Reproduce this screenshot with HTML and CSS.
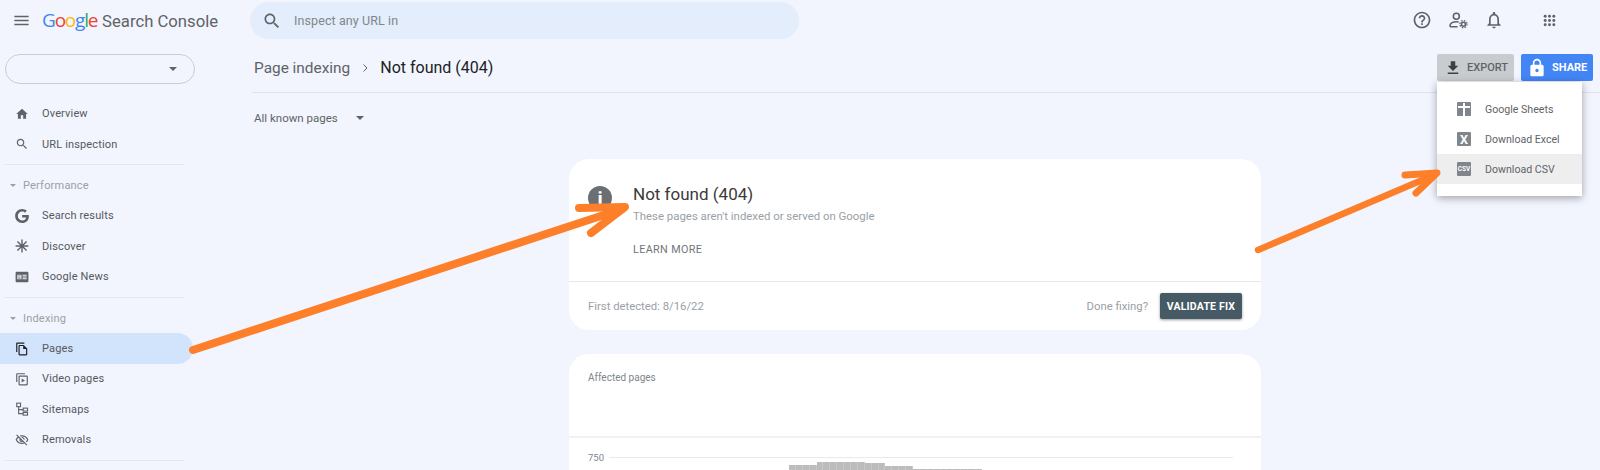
FILE: index.html
```html
<!DOCTYPE html>
<html lang="en">
<head>
  <meta charset="UTF-8" />
  <title>Google Search Console - Not found (404)</title>
  <link rel="stylesheet" href="styles.css">
</head>
<body>
  <header class="topbar">
    <svg class="menu-icon" viewBox="0 0 24 24"><path d="M3 18h18v-2H3v2zm0-5h18v-2H3v2zm0-7v2h18V6H3z"/></svg>
    <div class="logo">
      <span class="g-blue">G</span><span class="g-red">o</span><span class="g-yellow">o</span><span class="g-blue">g</span><span class="g-green">l</span><span class="g-red">e</span>
      <span class="logo-name">Search Console</span>
    </div>
    <div class="search">
      <svg class="search-icon" viewBox="0 0 24 24"><path d="M15.5 14h-.79l-.28-.27C15.41 12.59 16 11.11 16 9.5 16 5.91 13.09 3 9.5 3S3 5.91 3 9.5 5.91 16 9.5 16c1.61 0 3.09-.59 4.23-1.57l.27.28v.79l5 4.99L20.49 19l-4.99-5zm-6 0C7.01 14 5 11.99 5 9.5S7.01 5 9.5 5 14 7.01 14 9.5 11.99 14 9.5 14z"/></svg>
      <span>Inspect any URL in</span>
    </div>
    <div class="top-icons">
      <svg viewBox="0 0 24 24"><path d="M11 18h2v-2h-2v2zm1-16C6.48 2 2 6.48 2 12s4.48 10 10 10 10-4.48 10-10S17.52 2 12 2zm0 18c-4.41 0-8-3.59-8-8s3.59-8 8-8 8 3.59 8 8-3.59 8-8 8zm0-14c-2.21 0-4 1.79-4 4h2c0-1.1.9-2 2-2s2 .9 2 2c0 2-3 1.75-3 5h2c0-2.25 3-2.5 3-5 0-2.21-1.79-4-4-4z"/></svg>
      <svg class="line-icon" viewBox="0 0 24 24" stroke-width="1.9"><circle cx="10" cy="7.5" r="3.6"/><path d="M2.5 20v-1.6c0-2.8 4-4.4 7.5-4.4 1 0 1.9.1 2.8.4M2.5 20h9"/><circle cx="18.5" cy="17" r="2.4"/><circle cx="18.5" cy="17" r="4.3" stroke-width="1.6" stroke-dasharray="1.7 1.7"/></svg>
      <svg viewBox="0 0 24 24"><path d="M12 22c1.1 0 2-.9 2-2h-4c0 1.1.9 2 2 2zm6-6v-5c0-3.07-1.63-5.64-4.5-6.32V4c0-.83-.67-1.5-1.5-1.5s-1.5.67-1.5 1.5v.68C7.64 5.36 6 7.92 6 11v5l-2 2v1h16v-1l-2-2zm-2 1H8v-6c0-2.48 1.51-4.5 4-4.5s4 2.02 4 4.5v6z"/></svg>
      <svg class="apps" viewBox="0 0 24 24"><circle cx="4" cy="4" r="2.7"/><circle cx="12" cy="4" r="2.7"/><circle cx="20" cy="4" r="2.7"/><circle cx="4" cy="12" r="2.7"/><circle cx="12" cy="12" r="2.7"/><circle cx="20" cy="12" r="2.7"/><circle cx="4" cy="20" r="2.7"/><circle cx="12" cy="20" r="2.7"/><circle cx="20" cy="20" r="2.7"/></svg>
    </div>
  </header>

  <div class="layout">
    <aside class="sidebar">
      <div class="property"><span class="caret"></span></div>

      <a class="nav-item">
        <svg viewBox="0 0 24 24"><path d="M10 20v-6h4v6h5v-8h3L12 3 2 12h3v8z"/></svg>
        Overview
      </a>
      <a class="nav-item">
        <svg viewBox="0 0 24 24"><path d="M15.5 14h-.79l-.28-.27C15.41 12.59 16 11.11 16 9.5 16 5.91 13.09 3 9.5 3S3 5.91 3 9.5 5.91 16 9.5 16c1.61 0 3.09-.59 4.23-1.57l.27.28v.79l5 4.99L20.49 19l-4.99-5zm-6 0C7.01 14 5 11.99 5 9.5S7.01 5 9.5 5 14 7.01 14 9.5 11.99 14 9.5 14z"/></svg>
        URL inspection
      </a>
      <div class="nav-divider"></div>

      <div class="nav-group"><span class="group-caret"></span>Performance</div>
      <a class="nav-item">
        <svg viewBox="0 0 24 24"><path d="M12.24 10.285V14.4h6.806c-.275 1.765-2.056 5.174-6.806 5.174-4.095 0-7.439-3.389-7.439-7.574s3.345-7.574 7.439-7.574c2.33 0 3.891.989 4.785 1.849l3.254-3.138C18.189 1.186 15.479 0 12.24 0c-6.635 0-12 5.365-12 12s5.365 12 12 12c6.926 0 11.52-4.869 11.52-11.726 0-.788-.085-1.39-.189-1.989H12.24z"/></svg>
        Search results
      </a>
      <a class="nav-item">
        <svg class="line-icon" viewBox="0 0 24 24" stroke-width="2.4"><path d="M12 1v22M1 12h22M4.2 4.2l15.6 15.6M19.8 4.2L4.2 19.8"/></svg>
        Discover
      </a>
      <a class="nav-item">
        <svg viewBox="0 0 24 24"><path fill-rule="evenodd" d="M3 3h18a2 2 0 0 1 2 2v14a2 2 0 0 1-2 2H3a2 2 0 0 1-2-2V5a2 2 0 0 1 2-2zm1 5v8h7V8H4zm9 0v2h7V8h-7zm0 3v2h7v-2h-7zm0 3v2h7v-2h-7z"/><path d="M5.5 9.5h4v1.4h-4zM5.5 13h4v1.4h-4z"/></svg>
        Google News
      </a>
      <div class="nav-divider"></div>

      <div class="nav-group"><span class="group-caret"></span>Indexing</div>
      <a class="nav-item active">
        <svg viewBox="0 0 24 24"><path d="M16 1H4c-1.1 0-2 .9-2 2v14h2V3h12V1zm-1 4H8c-1.1 0-1.99.9-1.99 2L6 21c0 1.1.89 2 1.99 2H19c1.1 0 2-.9 2-2V11l-6-6zM8 21V7h6v5h5v9H8z"/></svg>
        Pages
      </a>
      <a class="nav-item">
        <svg viewBox="0 0 24 24"><path d="M4 2h13v2H4v13H2V4c0-1.1.9-2 2-2z"/><path fill-rule="evenodd" d="M8 6h12c1.1 0 2 .9 2 2v13c0 1.1-.9 2-2 2H8c-1.1 0-2-.9-2-2V8c0-1.1.9-2 2-2zm0 2v13h12V8H8z"/><path d="M11.5 11v7l5.5-3.5z"/></svg>
        Video pages
      </a>
      <a class="nav-item">
        <svg class="line-icon" viewBox="0 0 24 24" stroke-width="1.9"><rect x="3" y="2" width="6.5" height="6"/><rect x="14" y="10.5" width="7.5" height="5"/><rect x="14" y="18" width="7.5" height="4.5"/><path d="M6.2 8v12H14M6.2 13H14"/></svg>
        Sitemaps
      </a>
      <a class="nav-item">
        <svg viewBox="0 0 24 24"><path d="M12 6c3.79 0 7.17 2.13 8.82 5.5-.59 1.22-1.42 2.27-2.41 3.12l1.41 1.41c1.39-1.23 2.49-2.77 3.18-4.53C21.27 7.11 17 4 12 4c-1.27 0-2.49.2-3.64.57l1.65 1.65C10.66 6.09 11.32 6 12 6zm-1.07 1.14L13 9.21c.57.25 1.03.71 1.28 1.28l2.07 2.07c.08-.34.14-.7.14-1.07C16.5 9.01 14.48 7 12 7c-.37 0-.72.05-1.07.14zM2.01 3.87l2.68 2.68C3.06 7.83 1.77 9.53 1 11.5 2.73 15.89 7 19 12 19c1.52 0 2.98-.29 4.32-.82l3.42 3.42 1.41-1.41L3.42 2.45 2.01 3.87zm7.5 7.5l2.61 2.61c-.04.01-.08.02-.12.02-1.38 0-2.5-1.12-2.5-2.5 0-.05.01-.08.01-.13zm-3.4-3.4l1.75 1.75c-.23.55-.36 1.15-.36 1.78 0 2.48 2.02 4.5 4.5 4.5.63 0 1.23-.13 1.77-.36l.98.98c-.88.24-1.8.38-2.75.38-3.79 0-7.17-2.13-8.82-5.5.7-1.43 1.72-2.61 2.93-3.53z"/></svg>
        Removals
      </a>
      <div class="nav-divider"></div>
    </aside>

    <main class="content">
      <div class="page-head">
        <div class="crumbs">
          <span class="crumb">Page indexing</span>
          <svg class="crumb-sep line-icon" viewBox="0 0 24 24" stroke-width="2"><path d="M9 5l7 7-7 7"/></svg>
          <span class="crumb-current">Not found (404)</span>
        </div>
        <div class="head-actions">
          <div class="export-wrap">
            <button class="btn-export">
              <svg viewBox="0 0 24 24"><path d="M19 9h-4V3H9v6H5l7 7 7-7zM5 18v2h14v-2H5z"/></svg>
              EXPORT
            </button>
            <div class="export-menu">
              <div class="menu-item"><span class="file-icon sheets"></span>Google Sheets</div>
              <div class="menu-item"><span class="file-icon">X</span>Download Excel</div>
              <div class="menu-item selected"><span class="file-icon csv">CSV</span>Download CSV</div>
            </div>
          </div>
          <button class="btn-share">
            <svg viewBox="0 0 24 24"><path d="M18 8h-1V6c0-2.76-2.24-5-5-5S7 3.24 7 6v2H6c-1.1 0-2 .9-2 2v10c0 1.1.9 2 2 2h12c1.1 0 2-.9 2-2V10c0-1.1-.9-2-2-2zm-6 9c-1.1 0-2-.9-2-2s.9-2 2-2 2 .9 2 2-.9 2-2 2zm3.1-9H8.9V6c0-1.71 1.39-3.1 3.1-3.1 1.71 0 3.1 1.39 3.1 3.1v2z"/></svg>
            SHARE
          </button>
        </div>
      </div>

      <div class="filter">All known pages<span class="caret"></span></div>

      <section class="card">
        <div class="card-top">
          <div class="info-icon"><span>i</span></div>
          <div>
            <h2>Not found (404)</h2>
            <p class="card-sub">These pages aren't indexed or served on Google</p>
            <div class="learn-more">LEARN MORE</div>
          </div>
        </div>
        <div class="card-foot">
          <span>First detected: 8/16/22</span>
          <div class="foot-right">
            <span>Done fixing?</span>
            <button class="btn-validate">VALIDATE FIX</button>
          </div>
        </div>
      </section>

      <section class="card chart-card">
        <div class="chart-head">Affected pages</div>
        <div class="chart">
          <div class="grid-row"><span>750</span><div class="grid-line"></div></div>
          <div class="bars">
            <i class="b-mid"></i><i class="b-mid"></i><i class="b-mid"></i><i class="b-mid"></i>
            <i class="b-top"></i><i class="b-top"></i><i class="b-top"></i><i class="b-top"></i><i class="b-top"></i><i class="b-top"></i><i class="b-top"></i>
            <i class="b-high"></i><i class="b-high"></i><i class="b-high"></i>
            <i class="b-low"></i><i class="b-low"></i><i class="b-low"></i><i class="b-low"></i>
            <i class="b-min"></i><i class="b-min"></i><i class="b-min"></i><i class="b-min"></i><i class="b-min"></i>
            <i class="b-min"></i><i class="b-min"></i><i class="b-min"></i><i class="b-min"></i><i class="b-min"></i>
          </div>
        </div>
      </section>
    </main>
  </div>

  <!-- hand drawn arrows on top of the screenshot -->
  <svg class="arrows" viewBox="0 0 1600 470" stroke="#fd7f2a" stroke-linecap="round" stroke-linejoin="round">
    <path stroke-width="8" d="M193 350L622 209"/>
    <path stroke-width="8" d="M579 208L625 207L591 233"/>
    <path stroke-width="6.5" d="M1258 250L1434 175"/>
    <path stroke-width="7" d="M1405 175L1437 173L1416 193"/>
  </svg>
</body>
</html>
```

FILE: styles.css
```css
* {
  box-sizing: border-box;
}

body {
  margin: 0;
  width: 1600px;
  height: 470px;
  position: relative;
  overflow: hidden;
  background: #f2f5fd;
  font-family: Roboto, "Liberation Sans", sans-serif;
  color: #5f6368;
}

svg {
  fill: #5f6368;
  flex: none;
}

svg.line-icon {
  fill: none;
  stroke: #5f6368;
}

/* top bar */
.topbar {
  height: 40px;
  display: flex;
  align-items: center;
  padding-left: 12px;
}

.menu-icon {
  width: 19px;
  height: 19px;
}

.logo {
  width: 208px;
  flex: none;
  margin-left: 11px;
  font-family: "Open Sans", sans-serif;
  font-size: 19px;
  letter-spacing: -1.2px;
  white-space: nowrap;
}

.g-blue { color: #4285f4; }
.g-red { color: #ea4335; }
.g-yellow { color: #fbbc05; }
.g-green { color: #34a853; }

.logo-name {
  margin-left: 1px;
  font-family: Roboto, sans-serif;
  font-size: 16.7px;
  letter-spacing: 0;
  color: #5f6368;
}

.search {
  width: 549px;
  height: 37px;
  margin-top: 1px;
  padding-left: 12px;
  display: flex;
  align-items: center;
  gap: 12px;
  border-radius: 19px;
  background: #e3edfb;
  font-size: 12.5px;
  letter-spacing: 0.1px;
  color: #80868b;
}

.search-icon {
  width: 20px;
  height: 20px;
}

.top-icons {
  margin-left: auto;
  margin-right: 44px;
  display: flex;
  align-items: center;
  gap: 16px;
}

.top-icons svg {
  width: 20px;
  height: 20px;
}

.top-icons .apps {
  width: 13px;
  height: 13px;
  margin-left: 23px;
}

/* sidebar */
.layout {
  display: flex;
}

.sidebar {
  width: 252px;
  flex: none;
}

.property {
  width: 190px;
  height: 30px;
  margin: 14px 0 14.6px 5px;
  padding-right: 17px;
  display: flex;
  align-items: center;
  justify-content: flex-end;
  border: 1px solid #c9ccd1;
  border-radius: 15px;
}

.caret {
  width: 0;
  height: 0;
  border-left: 4px solid transparent;
  border-right: 4px solid transparent;
  border-top: 4px solid #5f6368;
}

.nav-item {
  width: 193px;
  height: 30.35px;
  padding-left: 15px;
  display: flex;
  align-items: center;
  gap: 13px;
  border-radius: 0 16px 16px 0;
  font-size: 11px;
  letter-spacing: 0.15px;
  color: #55595e;
}

.nav-item svg {
  width: 14px;
  height: 14px;
}

.nav-item.active {
  background: #d2e3fc;
}

.nav-item.active svg {
  fill: #202124;
}

.nav-divider {
  width: 179px;
  height: 1px;
  margin: 5.1px 0 5.1px 5px;
  background: #e3e6ec;
}

.nav-group {
  height: 30.35px;
  padding-left: 10px;
  display: flex;
  align-items: center;
  gap: 7px;
  font-size: 11px;
  letter-spacing: 0.2px;
  color: #9aa0a6;
}

.group-caret {
  width: 0;
  height: 0;
  border-left: 3px solid transparent;
  border-right: 3px solid transparent;
  border-top: 3px solid #9aa0a6;
}

/* main area */
.content {
  flex: 1;
  min-width: 0;
}

.page-head {
  padding: 14px 7px 11px 2px;
  display: flex;
  align-items: center;
  justify-content: space-between;
  border-bottom: 1px solid #dfe2e8;
}

.crumbs {
  display: flex;
  align-items: center;
  font-size: 15.4px;
}

.crumb-sep {
  width: 12px;
  height: 12px;
  margin: 0 9px;
}

.crumb-current {
  font-size: 16px;
  color: #202124;
}

.head-actions {
  display: flex;
  gap: 7px;
}

.export-wrap {
  position: relative;
}

button {
  font-family: inherit;
  border: 0;
  cursor: pointer;
}

.btn-export,
.btn-share {
  height: 27px;
  display: flex;
  align-items: center;
  gap: 5px;
  border-radius: 2px;
  font-size: 11px;
  font-weight: 500;
}

.btn-export {
  width: 77px;
  padding-left: 7px;
  background: #c9cccf;
  color: #5f6368;
}

.btn-export svg {
  width: 18px;
  height: 18px;
  fill: #3c4043;
}

.btn-share {
  width: 72px;
  padding-left: 6px;
  background: #4285f4;
  color: #fff;
  font-weight: 700;
}

.btn-share svg {
  width: 20px;
  height: 20px;
  fill: #fff;
}

.export-menu {
  position: absolute;
  top: 28px;
  left: 0;
  width: 145px;
  padding: 12px 0;
  background: #fff;
  box-shadow: 0 2px 8px rgba(0, 0, 0, 0.35);
  z-index: 2;
}

.menu-item {
  height: 30px;
  padding-left: 20px;
  display: flex;
  align-items: center;
  gap: 14px;
  font-size: 10.6px;
  color: #5f6368;
}

.menu-item.selected {
  background: #eeeeee;
}

.file-icon {
  width: 14px;
  height: 14px;
  display: flex;
  align-items: center;
  justify-content: center;
  border-radius: 1px;
  background: #80868b;
  color: #fff;
  font-size: 12.5px;
  font-weight: 700;
}

.file-icon.csv {
  font-size: 6.5px;
}

.file-icon.sheets {
  position: relative;
}

.file-icon.sheets::before,
.file-icon.sheets::after {
  content: "";
  position: absolute;
  background: #fff;
}

.file-icon.sheets::before {
  left: 1px;
  right: 1px;
  top: 4px;
  height: 1.5px;
}

.file-icon.sheets::after {
  left: 6.2px;
  top: 1px;
  bottom: 0;
  width: 1.5px;
}

.filter {
  height: 22px;
  margin: 14px 0 30px 2px;
  display: flex;
  align-items: center;
  gap: 18px;
  font-size: 11.5px;
}

.card {
  width: 692px;
  margin-left: 317px;
  border-radius: 20px;
  background: #fff;
}

.card-top {
  height: 123px;
  padding: 24px 0 0 19px;
  display: flex;
  gap: 21px;
  border-bottom: 1px solid #e6e8ea;
}

.info-icon {
  width: 24px;
  height: 24px;
  margin-top: 3px;
  display: flex;
  align-items: center;
  justify-content: center;
  border-radius: 50%;
  background: #6b6f74;
  color: #fff;
  font-size: 17px;
  font-weight: 900;
}

h2 {
  margin: 0;
  font-size: 17px;
  font-weight: 400;
  line-height: 22px;
  color: #3c3a3a;
}

.card-sub {
  margin: 2px 0 0;
  font-size: 11.4px;
  line-height: 18px;
  color: #9aa0a6;
}

.learn-more {
  margin-top: 16px;
  font-size: 10.8px;
  line-height: 18px;
  letter-spacing: 0.35px;
  color: #70757a;
}

.card-foot {
  height: 48px;
  padding: 0 19px 0 19px;
  display: flex;
  align-items: center;
  justify-content: space-between;
  font-size: 11.3px;
  color: #9aa0a6;
}

.foot-right {
  display: flex;
  align-items: center;
  gap: 12px;
}

.btn-validate {
  width: 82px;
  height: 26px;
  padding: 0;
  border-radius: 2px;
  background: #455a64;
  box-shadow: 0 1px 3px rgba(0, 0, 0, 0.4);
  color: #fff;
  font-size: 10.5px;
  font-weight: 700;
  letter-spacing: 0.2px;
}

.chart-card {
  height: 116px;
  margin-top: 24px;
  border-radius: 20px 20px 0 0;
}

.chart-head {
  height: 84px;
  padding: 16px 0 0 19px;
  border-bottom: 2px solid #f1f1f1;
  font-size: 10px;
  line-height: 16px;
  color: #80868b;
}

.chart {
  position: relative;
  padding-top: 10px;
}

.grid-row {
  height: 18px;
  padding: 0 28px 0 19px;
  display: flex;
  align-items: center;
  gap: 5px;
  font-size: 9.5px;
  color: #80868b;
}

.grid-line {
  flex: 1;
  height: 1px;
  background: #e8eaed;
}

.bars {
  position: absolute;
  left: 220px;
  top: 22px;
  height: 10px;
  display: flex;
  align-items: flex-end;
}

.bars i {
  width: 6.9px;
  background: #bcbcbc;
  border-right: 1px solid #c8c8c8;
}

.b-top { height: 8px; }
.b-high { height: 7px; }
.b-mid { height: 5px; }
.b-low { height: 4px; }
.b-min { height: 1px; }

.arrows {
  position: absolute;
  left: 0;
  top: 0;
  width: 1600px;
  height: 470px;
  fill: none;
  pointer-events: none;
  z-index: 5;
}
```
